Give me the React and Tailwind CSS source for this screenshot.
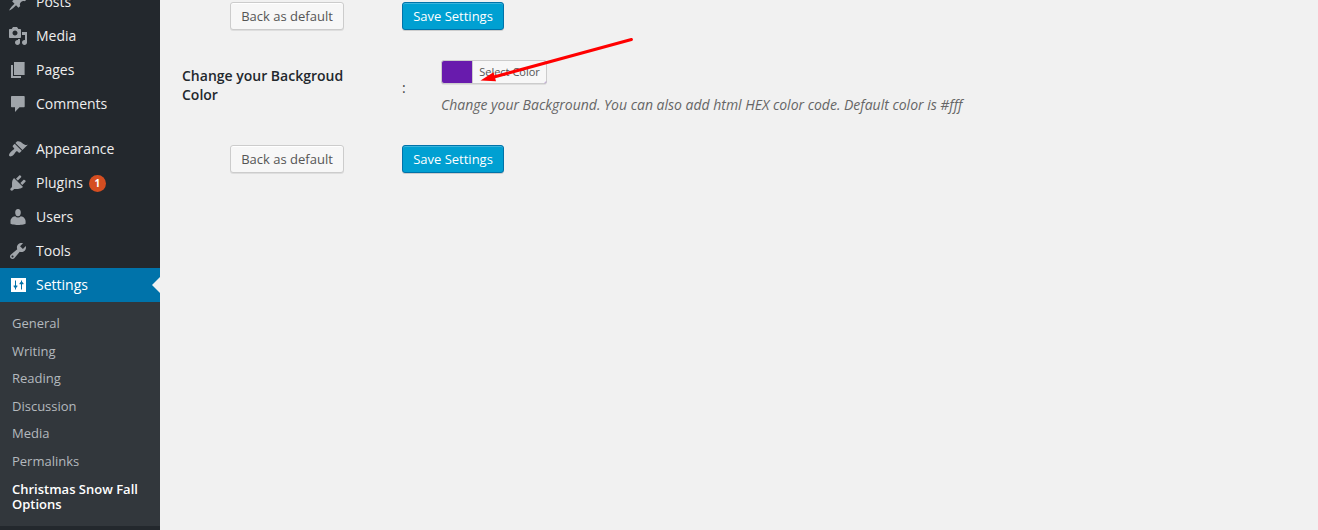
const ICONS = {
  posts: 'M10.44 3.02l1.82-1.82 6.36 6.35-1.83 1.82c-1.05-.68-2.48-.57-3.41.36l-.75.75c-.92.93-1.04 2.35-.35 3.41l-1.83 1.82-2.41-2.41-2.8 2.79c-.42.42-3.38 2.71-3.8 2.29s1.86-3.39 2.28-3.81l2.79-2.79L4.1 9.36l1.83-1.82c1.05.69 2.48.57 3.4-.36l.75-.75c.93-.92 1.05-2.35.36-3.41z',
  media: 'M13 11V4c0-.55-.45-1-1-1h-1.67L9 1H5L3.67 3H2c-.55 0-1 .45-1 1v7c0 .55.45 1 1 1h10c.55 0 1-.45 1-1zM7 4.5c1.38 0 2.5 1.12 2.5 2.5S8.38 9.5 7 9.5 4.5 8.38 4.5 7 5.62 4.5 7 4.5zM14 6h5v10.5c0 1.38-1.12 2.5-2.5 2.5S14 17.88 14 16.5s1.12-2.5 2.5-2.5c.17 0 .34.02.5.05V9h-3V6zm-4 8.05V13h2v3.5c0 1.38-1.12 2.5-2.5 2.5S7 17.88 7 16.5 8.12 14 9.5 14c.17 0 .34.02.5.05z',
  pages: 'M6 15V2h10.6v13H6zm-1 1h8v2H3V5h2v11z',
  comments: 'M4 2h11.7c.6 0 1 .4 1 1v9.3c0 .6-.4 1-1 1h-4.2L7 18v-4.7H4c-.6 0-1-.4-1-1V3c0-.6.4-1 1-1z',
  appearance: 'M14.48 11.06L7.41 3.99l1.5-1.5c.5-.56 2.3-.47 3.51.32 1.21.8 1.43 1.28 2.91 2.1 1.18.64 2.45 1.26 4.45.85zm-.71.71L6.7 4.7 4.93 6.47c-.39.39-.39 1.02 0 1.41l1.06 1.06c.39.39.39 1.03 0 1.42-.6.6-1.43 1.11-2.21 1.69-.35.26-.7.53-1.01.84C1.43 14.23.4 16.08 1.4 17.07c.99 1 2.84-.03 4.18-1.36.31-.31.58-.66.85-1.02.57-.78 1.08-1.61 1.69-2.21.39-.39 1.02-.39 1.41 0l1.06 1.06c.39.39 1.02.39 1.41 0z',
  plugins: 'M13.11 4.36L9.87 7.6 8 5.73l3.24-3.24c.35-.34 1.05-.2 1.56.32.52.51.66 1.21.31 1.55zm-8 1.77l.91-1.12 9.01 9.01-1.19.84c-.71.71-2.63 1.16-3.82 1.16H6.14L4.9 17.26c-.59.59-1.54.59-2.12 0-.59-.58-.59-1.53 0-2.12l1.24-1.24v-3.88c0-1.13.4-3.19 1.09-3.89zm7.26 3.97l3.24-3.24c.34-.35 1.04-.21 1.55.31.52.51.66 1.21.31 1.55l-3.24 3.25z',
  users: 'M10 9.2c-2.2 0-2.8-2.3-2.8-3.8C7.2 3.6 8.2 2 10 2s2.8 1.6 2.8 3.4c0 1.5-.6 3.8-2.8 3.8zM7.2 9.2c.7.8 1.7 1.2 2.8 1.2s2.1-.4 2.8-1.2c2.8.2 4.8 2.6 4.8 5v2.6S14 18.1 10 18.1s-7.5-1.3-7.5-1.3v-2.6c0-2.4 1.9-4.8 4.7-5z',
  tools: 'M16.68 9.77c-1.34 1.34-3.3 1.67-4.95.99l-5.41 6.52c-.99.99-2.59.99-3.58 0s-.99-2.59 0-3.57l6.52-5.42c-.68-1.65-.35-3.61.99-4.95 1.28-1.28 3.12-1.62 4.72-1.06l-2.89 2.89 2.82 2.82 2.86-2.87c.53 1.58.18 3.39-1.08 4.65zM3.81 16.21c.4.39 1.04.39 1.43 0 .4-.4.4-1.04 0-1.43-.39-.4-1.03-.4-1.43 0-.39.39-.39 1.03 0 1.43z',
  settings: 'M3 3h15v14H3zM7 5.5v5H5.6v1L7 12.9v1.6h1v-1.6l1.4-1.4v-1H8v-5zM13 5.5v1.3l-1.5 1.4v1H13v5.3h1V9.2h1.5v-1L14 6.8V5.5z',
};

const SUBMENU = ['General', 'Writing', 'Reading', 'Discussion', 'Media', 'Permalinks'];

function MenuItem({ icon, label, badge, active }) {
  return (
    <a className={`flex h-[34px] shrink-0 items-center pl-2 text-[14px] leading-[18px] ${active ? 'relative bg-[#0073aa] text-white' : 'text-[#eeeeee]'}`}>
      <svg viewBox="0 0 20 20" className={`size-5 ${active ? 'fill-white' : 'fill-[#a0a5aa]'}`}>
        <path fillRule="evenodd" d={ICONS[icon]} />
      </svg>
      <span className="ml-2">{label}</span>
      {badge && (
        <span className="mt-px ml-1.5 flex h-[17px] w-[17px] items-center justify-center rounded-full bg-[#d54e21] text-[10px] leading-[17px] font-bold text-white">
          {badge}
        </span>
      )}
      {active && (
        <span className="absolute top-[9px] right-0 border-y-8 border-r-8 border-y-transparent border-r-[#f1f1f1]" />
      )}
    </a>
  );
}

function ButtonRow() {
  return (
    <div className="flex gap-[58px] pl-12 text-[13px] leading-[26px]">
      <button className="h-7 w-[114px] rounded-[3px] border border-[#cccccc] bg-[#f7f7f7] text-[#555555] shadow-[inset_0_1px_0_#fff,0_1px_0_rgba(0,0,0,.08)]">
        Back as default
      </button>
      <button className="h-7 w-[102px] rounded-[3px] border border-[#0073aa] bg-[#00a0d2] text-white shadow-[inset_0_1px_0_rgba(120,200,230,.5),0_1px_0_rgba(0,0,0,.15)]">
        Save Settings
      </button>
    </div>
  );
}

export default function App() {
  return (
    <div className="relative flex h-[530px] w-full overflow-hidden bg-[#f1f1f1] font-['Open_Sans',sans-serif]">
      <nav className="-mt-[15px] flex h-[545px] w-40 shrink-0 flex-col bg-[#23282d]">
        <MenuItem icon="posts" label="Posts" />
        <MenuItem icon="media" label="Media" />
        <MenuItem icon="pages" label="Pages" />
        <MenuItem icon="comments" label="Comments" />
        <div className="h-[11px] shrink-0" />
        <MenuItem icon="appearance" label="Appearance" />
        <MenuItem icon="plugins" label="Plugins" badge="1" />
        <MenuItem icon="users" label="Users" />
        <MenuItem icon="tools" label="Tools" />
        <MenuItem icon="settings" label="Settings" active />
        <ul className="shrink-0 bg-[#32373c] pt-2 pb-[7px] text-[13px] leading-[15.6px] text-[#b4b9be]">
          {SUBMENU.map((item) => (
            <li key={item} className="px-3 py-1.5">{item}</li>
          ))}
          <li className="px-3 py-1.5 font-semibold text-white">Christmas Snow Fall Options</li>
        </ul>
      </nav>

      <main className="flex-1 pt-0.5 pl-[22px]">
        <ButtonRow />
        <div className="flex h-[115px] pt-[30px]">
          <h3 className="w-[220px] pt-[6px] pr-10 text-[14px] leading-[19px] font-semibold text-[#23282d]">
            Change your Backgroud Color
          </h3>
          <span className="w-[39px] pt-[18px] text-[14px] leading-[19px] text-[#444444]">:</span>
          <div>
            <button className="flex h-6 w-[106px] rounded-[3px] border border-[#cccccc] bg-[#681bad] text-[11px] leading-[22px] text-[#555555] shadow-[0_1px_0_rgba(0,0,0,.08)]">
              <span className="ml-[30px] h-[22px] flex-1 rounded-r-[2px] border-l border-[#cccccc] bg-[#f7f7f7] text-center">
                Select Color
              </span>
            </button>
            <p className="mt-[11px] text-[14px] leading-[19px] tracking-[-0.01px] whitespace-nowrap text-[#666666] italic">
              Change your Background. You can also add html HEX color code. Default color is #fff
            </p>
          </div>
        </div>
        <ButtonRow />
      </main>

      <svg viewBox="0 0 160 50" className="absolute top-[35px] left-[478px] h-[50px] w-40">
        <path d="M153.4 4.5L16 42" stroke="#ff0000" strokeWidth="3" strokeLinecap="round" />
        <path d="M2.5 45.5L15.5 37.2L18 46.2Z" fill="#ff0000" />
      </svg>
    </div>
  );
}
